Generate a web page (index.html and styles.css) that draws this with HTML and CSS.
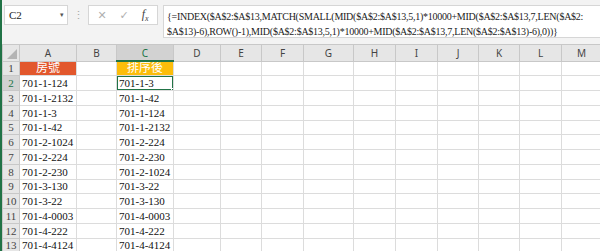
FILE: index.html
```html
<!DOCTYPE html>
<html lang="zh-Hant">
<head>
    <meta charset="UTF-8">
    <title>排序</title>
    <link rel="stylesheet" href="styles.css">
</head>
<body>
    <div class="window">
        <div class="formula-bar">
            <div class="name-box"><span>C2</span><span class="caret">&#9662;</span></div>
            <div class="grip">&#8942;</div>
            <div class="fx-box">
                <span class="cancel">&#10005;</span>
                <span class="enter">&#10003;</span>
                <span class="fx">f<sub>x</sub></span>
            </div>
            <div class="formula">
                <div>{=INDEX($A$2:$A$13,MATCH(SMALL(MID($A$2:$A$13,5,1)*10000+MID($A$2:$A$13,7,LEN($A$2:</div>
                <div>$A$13)-6),ROW()-1),MID($A$2:$A$13,5,1)*10000+MID($A$2:$A$13,7,LEN($A$2:$A$13)-6),0))}</div>
            </div>
        </div>

        <table class="sheet">
            <colgroup>
                <col style="width:17px"><col style="width:57px"><col style="width:40px"><col style="width:57px">
                <col style="width:47px"><col style="width:41px"><col style="width:42px"><col style="width:50px">
                <col style="width:42px"><col style="width:42px"><col style="width:41px"><col style="width:41px">
                <col style="width:42px"><col style="width:40px">
            </colgroup>
            <thead>
                <tr>
                    <th class="corner"></th>
                    <th>A</th><th>B</th><th class="selected">C</th><th>D</th><th>E</th><th>F</th>
                    <th>G</th><th>H</th><th>I</th><th>J</th><th>K</th><th>L</th><th>M</th>
                </tr>
            </thead>
            <tbody>
                <tr><th>1</th><td class="title red">房號</td><td></td><td class="title gold">排序後</td><td></td><td></td><td></td><td></td><td></td><td></td><td></td><td></td><td></td><td></td></tr>
                <tr><th class="selected">2</th><td>701-1-124</td><td></td><td class="active">701-1-3</td><td></td><td></td><td></td><td></td><td></td><td></td><td></td><td></td><td></td><td></td></tr>
                <tr><th>3</th><td>701-1-2132</td><td></td><td>701-1-42</td><td></td><td></td><td></td><td></td><td></td><td></td><td></td><td></td><td></td><td></td></tr>
                <tr><th>4</th><td>701-1-3</td><td></td><td>701-1-124</td><td></td><td></td><td></td><td></td><td></td><td></td><td></td><td></td><td></td><td></td></tr>
                <tr><th>5</th><td>701-1-42</td><td></td><td>701-1-2132</td><td></td><td></td><td></td><td></td><td></td><td></td><td></td><td></td><td></td><td></td></tr>
                <tr><th>6</th><td>701-2-1024</td><td></td><td>701-2-224</td><td></td><td></td><td></td><td></td><td></td><td></td><td></td><td></td><td></td><td></td></tr>
                <tr><th>7</th><td>701-2-224</td><td></td><td>701-2-230</td><td></td><td></td><td></td><td></td><td></td><td></td><td></td><td></td><td></td><td></td></tr>
                <tr><th>8</th><td>701-2-230</td><td></td><td>701-2-1024</td><td></td><td></td><td></td><td></td><td></td><td></td><td></td><td></td><td></td><td></td></tr>
                <tr><th>9</th><td>701-3-130</td><td></td><td>701-3-22</td><td></td><td></td><td></td><td></td><td></td><td></td><td></td><td></td><td></td><td></td></tr>
                <tr><th>10</th><td>701-3-22</td><td></td><td>701-3-130</td><td></td><td></td><td></td><td></td><td></td><td></td><td></td><td></td><td></td><td></td></tr>
                <tr><th>11</th><td>701-4-0003</td><td></td><td>701-4-0003</td><td></td><td></td><td></td><td></td><td></td><td></td><td></td><td></td><td></td><td></td></tr>
                <tr><th>12</th><td>701-4-222</td><td></td><td>701-4-222</td><td></td><td></td><td></td><td></td><td></td><td></td><td></td><td></td><td></td><td></td></tr>
                <tr><th>13</th><td>701-4-4124</td><td></td><td>701-4-4124</td><td></td><td></td><td></td><td></td><td></td><td></td><td></td><td></td><td></td><td></td></tr>
            </tbody>
        </table>
    </div>
</body>
</html>
```

FILE: styles.css
```css
body {
    margin: 0;
    font-family: "Liberation Serif", "Noto Sans CJK TC", serif;
    background-color: #fff;
}

.window {
    height: 251px;
    overflow: hidden;
    border-left: 2px solid #217346; /* 左側綠邊 */
    background-color: #f3f3f3;
}

/* 公式列 */
.formula-bar {
    display: flex;
    align-items: flex-start;
    height: 44px;
    padding: 5px 0 0 2px;
    box-sizing: border-box;
}

.name-box {
    width: 64px;
    height: 20px;
    display: flex;
    align-items: center;
    justify-content: space-between;
    padding: 0 3px 0 4px;
    box-sizing: border-box;
    background-color: #fff;
    border: 1px solid #d6d6d6;
    font-size: 11px;
    color: #222;
}

.caret {
    font-size: 7px;
    color: #555;
}

.grip {
    width: 20px;
    line-height: 20px;
    text-align: center;
    font-size: 11px;
    color: #a8a8a8;
}

.fx-box {
    width: 70px;
    height: 20px;
    display: flex;
    align-items: center;
    justify-content: space-around;
    padding: 0 2px;
    box-sizing: border-box;
    background-color: #fff;
    border: 1px solid #d6d6d6;
}

.cancel,
.enter {
    font-family: "DejaVu Sans", sans-serif;
    font-size: 11px;
    color: #b0b0b0;
}

.fx {
    font-style: italic;
    font-size: 12px;
    color: #444;
}

.fx sub {
    font-size: 8px;
}

.formula {
    flex: 1;
    height: 33px;
    margin-left: 5px;
    padding: 3px 0 0 3px;
    box-sizing: border-box;
    background-color: #fff;
    border: 1px solid #d6d6d6;
    border-right: none;
    font-size: 10px;
    letter-spacing: -0.25px;
    line-height: 15px;
    color: #222;
    white-space: nowrap;
    overflow: hidden;
}

/* 工作表 */
.sheet {
    border-collapse: collapse;
    table-layout: fixed;
    width: 599px;
    background-color: #fff;
    font-size: 11px;
    color: #111;
}

.sheet td,
.sheet th {
    padding: 0 2px;
    border: 1px solid #dcdcdc;
    white-space: nowrap;
    overflow: hidden;
}

.sheet tbody tr {
    height: 14.75px;
}

.sheet td {
    vertical-align: bottom;
    line-height: 13px;
}

.sheet thead th {
    height: 15px;
    padding: 0;
    background-color: #e6e6e6;
    border-color: #c8c8c8;
    font-family: "Noto Sans", sans-serif;
    font-size: 10px;
    font-weight: normal;
    color: #444;
}

.sheet thead th.selected {
    background-color: #d2d2d2;
    border-bottom: 2px solid #217346;
    color: #217346;
}

.sheet tbody th {
    padding: 0;
    background-color: #e6e6e6;
    border-color: #c8c8c8;
    font-weight: normal;
    font-size: 11px;
    color: #444;
}

.sheet tbody th.selected {
    background-color: #d2d2d2;
    color: #217346;
}

.corner {
    position: relative;
}

.corner::after {
    content: "";
    position: absolute;
    right: 2px;
    bottom: 2px;
    border-style: solid;
    border-width: 0 0 10px 10px;
    border-color: transparent transparent #b4b4b4 transparent;
}

.title {
    text-align: center;
    color: #fff;
    font-size: 12px;
}

.red {
    background-color: #e2572c;
}

.gold {
    background-color: #fcbd0b;
}

.active {
    position: relative;
}

.active::after {
    content: "";
    position: absolute;
    left: -1px;
    top: -1px;
    right: -1px;
    bottom: -1px;
    border: 2px solid #217346;
}

.active::before {
    content: "";
    position: absolute;
    right: -3px;
    bottom: -3px;
    width: 5px;
    height: 5px;
    background-color: #217346;
    border: 1px solid #fff;
    box-sizing: border-box;
    z-index: 1;
}
```
